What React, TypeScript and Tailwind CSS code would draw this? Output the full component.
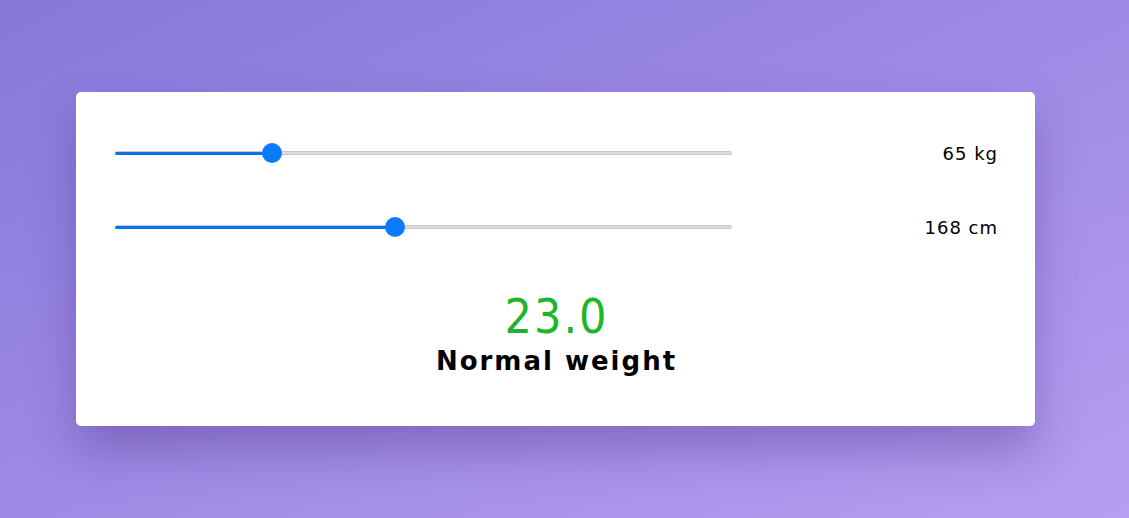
const ROWS = [
  { value: "65 kg", fill: 0.246 },
  { value: "168 cm", fill: 0.453 },
];

function Slider({ fill }: { fill: number }) {
  return (
    <div className="relative w-[617px] h-[20px] flex items-center">
      <div className="w-full h-[4px] rounded-full bg-[#dcdcdc] border border-[#c9c9c9]" />
      <div
        className="absolute left-0 h-[3px] rounded-full bg-[#0b73e6]"
        style={{ width: `calc(10px + ${fill} * (100% - 20px))` }}
      />
      <div
        className="absolute w-[20px] h-[20px] rounded-full bg-[#0a7bff]"
        style={{ left: `calc(${fill} * (100% - 20px))` }}
      />
    </div>
  );
}

export default function App() {
  return (
    <div className="min-h-[518px] w-full bg-gradient-to-br from-[#8677d9] to-[#b79ef0] pt-[92px] pb-[92px] font-['DejaVu_Sans',sans-serif]">
      <div className="ml-[76px] w-[959px] h-[334px] bg-white rounded-[5px] shadow-[0_25px_45px_rgba(70,40,130,0.35)] pl-[39px] pr-[37px] pt-[40px]">
        <div className="flex flex-col gap-[32px]">
          {ROWS.map((row) => (
            <div key={row.value} className="flex items-center h-[42px]">
              <Slider fill={row.fill} />
              <div className="flex-1 text-right text-[18px] tracking-[1px] text-black">
                {row.value}
              </div>
            </div>
          ))}
        </div>
        <div className="mt-[44px] flex flex-col items-center">
          <div className="text-[48px] leading-none text-[#1db52a] tracking-[2px] font-['DejaVu_Sans_Condensed','DejaVu_Sans',sans-serif] [font-stretch:condensed]">
            23.0
          </div>
          <div className="text-[26px] leading-none font-bold tracking-[2px] text-black mt-[8px]">
            Normal weight
          </div>
        </div>
      </div>
    </div>
  );
}
